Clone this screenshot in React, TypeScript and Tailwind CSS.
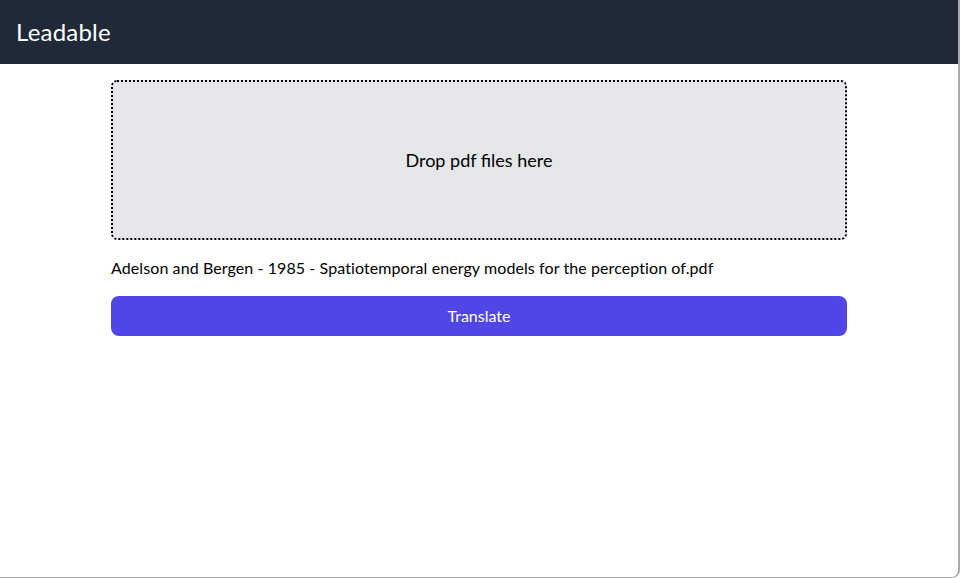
export default function App() {
  const font = { fontFamily: 'Lato, "Noto Sans", sans-serif' };
  return (
    <div
      className="flex h-[578px] w-[960px] flex-col overflow-hidden rounded-br-lg border-r-2 border-b border-[#a8a8a8] bg-white text-black"
      style={font}
    >
      <header className="flex h-16 shrink-0 items-center bg-[#1f2937] px-4">
        <h1 className="text-2xl tracking-[0.2px] text-white">Leadable</h1>
      </header>
      <main className="mx-auto w-full max-w-3xl px-4 pt-4">
        <div className="flex h-40 items-center justify-center rounded-md border-2 border-dotted border-black bg-[#e5e7eb]">
          <p className="text-lg">Drop pdf files here</p>
        </div>
        <p className="mt-4 text-base tracking-[0.09px] [font-variant-ligatures:none]">
          Adelson and Bergen - 1985 - Spatiotemporal energy models for the perception of.pdf
        </p>
        <button className="mt-4 flex h-10 w-full items-center justify-center rounded-lg bg-[#4f46e5] text-base text-white">
          Translate
        </button>
      </main>
    </div>
  );
}
